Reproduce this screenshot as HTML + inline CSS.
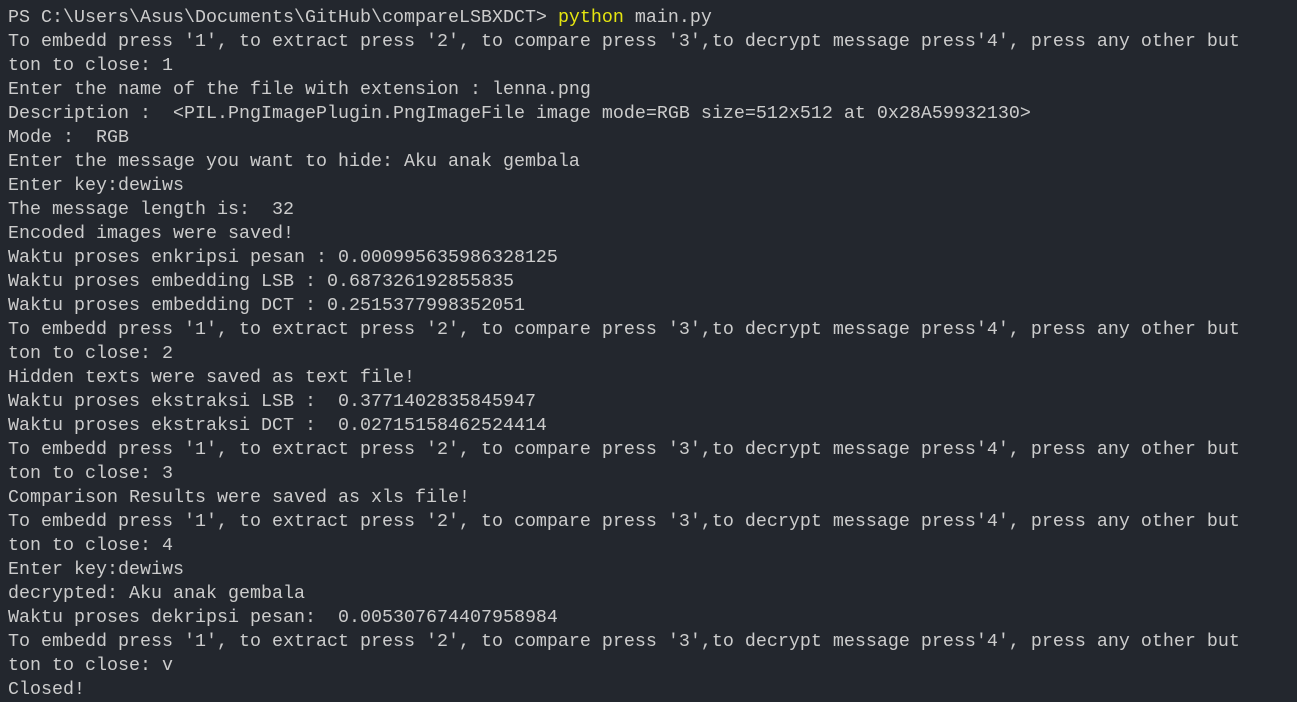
<!DOCTYPE html>
<html><head><style>
html,body{margin:0;padding:0;background:#23272e;width:1297px;height:702px;overflow:hidden}
pre{margin:0;padding:6px 0 0 8px;font-family:"Liberation Mono",monospace;font-size:18.33px;line-height:24px;color:#cccccc;white-space:pre}
.y{color:#e5e510}
</style></head><body><pre>PS C:\Users\Asus\Documents\GitHub\compareLSBXDCT&gt; <span class="y">python</span> main.py
To embedd press '1', to extract press '2', to compare press '3',to decrypt message press'4', press any other but
ton to close: 1
Enter the name of the file with extension : lenna.png
Description :  &lt;PIL.PngImagePlugin.PngImageFile image mode=RGB size=512x512 at 0x28A59932130&gt;
Mode :  RGB
Enter the message you want to hide: Aku anak gembala
Enter key:dewiws
The message length is:  32
Encoded images were saved!
Waktu proses enkripsi pesan : 0.000995635986328125
Waktu proses embedding LSB : 0.687326192855835
Waktu proses embedding DCT : 0.2515377998352051
To embedd press '1', to extract press '2', to compare press '3',to decrypt message press'4', press any other but
ton to close: 2
Hidden texts were saved as text file!
Waktu proses ekstraksi LSB :  0.3771402835845947
Waktu proses ekstraksi DCT :  0.02715158462524414
To embedd press '1', to extract press '2', to compare press '3',to decrypt message press'4', press any other but
ton to close: 3
Comparison Results were saved as xls file!
To embedd press '1', to extract press '2', to compare press '3',to decrypt message press'4', press any other but
ton to close: 4
Enter key:dewiws
decrypted: Aku anak gembala
Waktu proses dekripsi pesan:  0.005307674407958984
To embedd press '1', to extract press '2', to compare press '3',to decrypt message press'4', press any other but
ton to close: v
Closed!</pre></body></html>
